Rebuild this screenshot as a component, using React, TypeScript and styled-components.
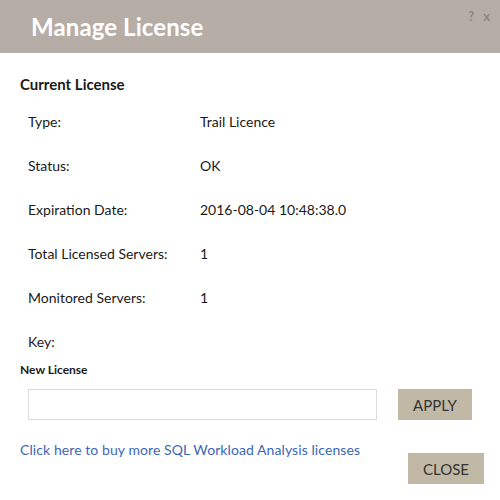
import React from "react";
import styled, { createGlobalStyle } from "styled-components";

const Global = createGlobalStyle`
  html, body { margin: 0; padding: 0; background: #fff; }
  body { font-family: Lato, "Noto Sans", sans-serif; color: #1a1a1a; }
`;

const Dialog = styled.div`
  width: 500px;
  height: 500px;
  background: #fff;
  display: flex;
  flex-direction: column;
`;

const Header = styled.div`
  height: 53px;
  background: #b6ada6;
  display: flex;
  align-items: center;
  padding: 0 10px 0 31px;
  position: relative;
`;

const Title = styled.h1`
  margin: 0;
  font-size: 24px;
  font-weight: 700;
  color: #fff;
  letter-spacing: 0.1px;
`;

const Tools = styled.div`
  position: absolute;
  top: 8px;
  right: 10px;
  font-size: 13px;
  font-weight: 700;
  color: #8f8882;
  display: flex;
  gap: 9px;
`;

const Body = styled.div`
  padding: 20px 16px 0 20px;
  display: flex;
  flex-direction: column;
`;

const SectionTitle = styled.div`
  font-size: 15px;
  font-weight: 700;
  line-height: 22px;
  margin-bottom: 4px;
`;

const InfoGrid = styled.div`
  display: grid;
  grid-template-columns: 172px 1fr;
  grid-auto-rows: 44px;
  padding-left: 8px;
  font-size: 14px;
  align-items: center;
`;

const Cell = styled.div``;

const SubTitle = styled.div`
  font-size: 12px;
  font-weight: 700;
  line-height: 14px;
`;

const InputRow = styled.div`
  display: flex;
  gap: 21px;
  padding-left: 8px;
  margin-top: 12px;
`;

const Input = styled.input`
  width: 349px;
  height: 31px;
  box-sizing: border-box;
  border: 1px solid #dcdcdc;
  outline: none;
  padding: 0 8px;
`;

const Button = styled.button<{ $w: number }>`
  width: ${(p) => p.$w}px;
  height: 31px;
  border: none;
  background: #c1b9a5;
  color: #333;
  font-family: Lato, "Noto Sans", sans-serif;
  font-size: 15px;
  padding: 0;
`;

const Footer = styled.div`
  display: flex;
  justify-content: space-between;
  align-items: flex-start;
  margin-top: 20px;
`;

const Link = styled.a`
  color: #3b66b8;
  font-size: 14px;
  line-height: 20px;
  letter-spacing: 0.08px;
  text-decoration: none;
`;

const CloseWrap = styled.div`
  margin-top: 13px;
`;

const rows: [string, string][] = [
  ["Type:", "Trail Licence"],
  ["Status:", "OK"],
  ["Expiration Date:", "2016-08-04 10:48:38.0"],
  ["Total Licensed Servers:", "1"],
  ["Monitored Servers:", "1"],
  ["Key:", ""],
];

export default function App() {
  return (
    <Dialog>
      <Global />
      <Header>
        <Title>Manage License</Title>
        <Tools>
          <span>?</span>
          <span>x</span>
        </Tools>
      </Header>
      <Body>
        <SectionTitle>Current License</SectionTitle>
        <InfoGrid>
          {rows.map(([k, v]) => (
            <React.Fragment key={k}>
              <Cell>{k}</Cell>
              <Cell>{v}</Cell>
            </React.Fragment>
          ))}
        </InfoGrid>
        <SubTitle>New License</SubTitle>
        <InputRow>
          <Input />
          <Button $w={74}>APPLY</Button>
        </InputRow>
        <Footer>
          <Link href="#">Click here to buy more SQL Workload Analysis licenses</Link>
          <CloseWrap>
            <Button $w={76}>CLOSE</Button>
          </CloseWrap>
        </Footer>
      </Body>
    </Dialog>
  );
}
